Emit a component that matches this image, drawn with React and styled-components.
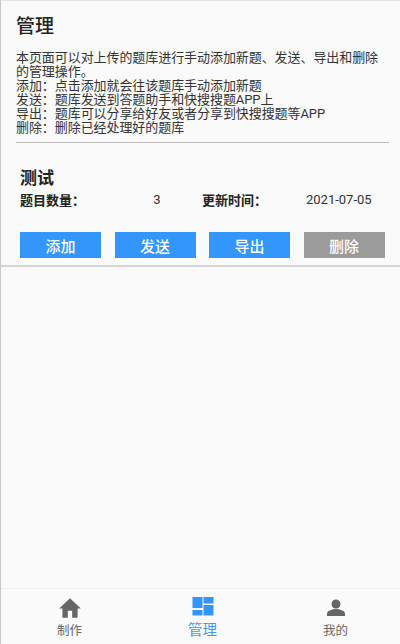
import React from 'react';
import styled, { createGlobalStyle } from 'styled-components';

const GlobalStyle = createGlobalStyle`
  html, body {
    margin: 0;
    padding: 0;
    background: #fafafa;
  }
  body {
    font-family: "Roboto", "Noto Sans CJK SC", sans-serif;
  }
`;

const Page = styled.div`
  width: 400px;
  height: 644px;
  box-sizing: border-box;
  display: flex;
  flex-direction: column;
  background: #fafafa;
  border-top: 1px solid #e2e2e2;
  border-left: 1px solid #c8c8c8;
  overflow: hidden;
`;

const Main = styled.main`
  flex: 1;
`;

const Intro = styled.section`
  padding: 12px 11px 0 15px;
`;

const Title = styled.h1`
  margin: 0 0 11px;
  font-size: 19px;
  line-height: 27px;
  font-weight: 500;
  color: #222;
`;

const Description = styled.p`
  margin: 0;
  padding-bottom: 7px;
  border-bottom: 1px solid #bdbdbd;
  font-size: 13px;
  line-height: 14px;
  letter-spacing: -0.07px;
  color: #333;
  white-space: pre-line;
`;

const Card = styled.section`
  padding: 24px 0 7px 19px;
  border-bottom: 2px solid #d4d4d4;
`;

const CardTitle = styled.h2`
  margin: 0;
  font-size: 17px;
  line-height: 22px;
  font-weight: 700;
  color: #222;
`;

const Meta = styled.div`
  display: grid;
  grid-template-columns: 92px 90px 104px auto;
  align-items: center;
  height: 20px;
  font-size: 13px;
  color: #333;
`;

const MetaLabel = styled.span`
  font-weight: 700;
  color: #222;
`;

const MetaValue = styled.span`
  text-align: ${(p) => p.$align || 'left'};
`;

const Actions = styled.div`
  display: flex;
  gap: 13.5px;
  margin-top: 23px;
`;

const ActionButton = styled.button`
  width: 81px;
  height: 26px;
  padding: 0;
  border: none;
  background: ${(p) => (p.$muted ? '#9b9b9b' : '#3296fa')};
  color: #fff;
  font-family: inherit;
  font-size: 15px;
  font-weight: 500;
`;

const TabBar = styled.nav`
  height: 55px;
  display: grid;
  grid-template-columns: repeat(3, 133px);
  padding-left: 2px;
  border-top: 1px solid #efefef;
`;

const Tab = styled.div`
  display: flex;
  flex-direction: column;
  align-items: center;
  padding-top: 6px;
  color: ${(p) => (p.$active ? '#3a9bee' : '#666')};
`;

const TabIcon = styled.svg`
  width: 26px;
  height: 26px;
  display: block;
  fill: ${(p) => (p.$active ? '#3296fa' : '#666')};
`;

const TabLabel = styled.span`
  font-size: ${(p) => (p.$active ? '14.5px' : '12.5px')};
  line-height: 17px;
  margin-top: 1px;
`;

const description = `本页面可以对上传的题库进行手动添加新题、发送、导出和删除的管理操作。
添加：点击添加就会往该题库手动添加新题
发送：题库发送到答题助手和快搜搜题APP上
导出：题库可以分享给好友或者分享到快搜搜题等APP
删除：删除已经处理好的题库`;

const actions = [
  { label: '添加' },
  { label: '发送' },
  { label: '导出' },
  { label: '删除', muted: true },
];

const App = () => (
  <Page>
    <GlobalStyle />
    <Main>
      <Intro>
        <Title>管理</Title>
        <Description>{description}</Description>
      </Intro>
      <Card>
        <CardTitle>测试</CardTitle>
        <Meta>
          <MetaLabel>题目数量：</MetaLabel>
          <MetaValue $align="center">3</MetaValue>
          <MetaLabel>更新时间：</MetaLabel>
          <MetaValue>2021-07-05</MetaValue>
        </Meta>
        <Actions>
          {actions.map((a) => (
            <ActionButton key={a.label} $muted={a.muted}>{a.label}</ActionButton>
          ))}
        </Actions>
      </Card>
    </Main>
    <TabBar>
      <Tab>
        <TabIcon viewBox="0 0 24 24">
          <path d="M10 21v-6.500h4V21h5v-8.500h3L12 3 2 12.500h3V21z" />
        </TabIcon>
        <TabLabel>制作</TabLabel>
      </Tab>
      <Tab $active>
        <TabIcon $active viewBox="0 0 26 26">
          <path d="M2.500 2h10v11h-10zM13.500 2h10v6.500h-10zM2.500 15h10v5.500h-10zM13.500 10h10v10.500h-10z" />
        </TabIcon>
        <TabLabel $active>管理</TabLabel>
      </Tab>
      <Tab>
        <TabIcon viewBox="0 0 26 26">
          <circle cx="13" cy="9" r="4.500" />
          <path d="M4 21v-2.500c0-2.800 5.800-4.500 9-4.500s9 1.700 9 4.500V21z" />
        </TabIcon>
        <TabLabel>我的</TabLabel>
      </Tab>
    </TabBar>
  </Page>
);

export default App;
